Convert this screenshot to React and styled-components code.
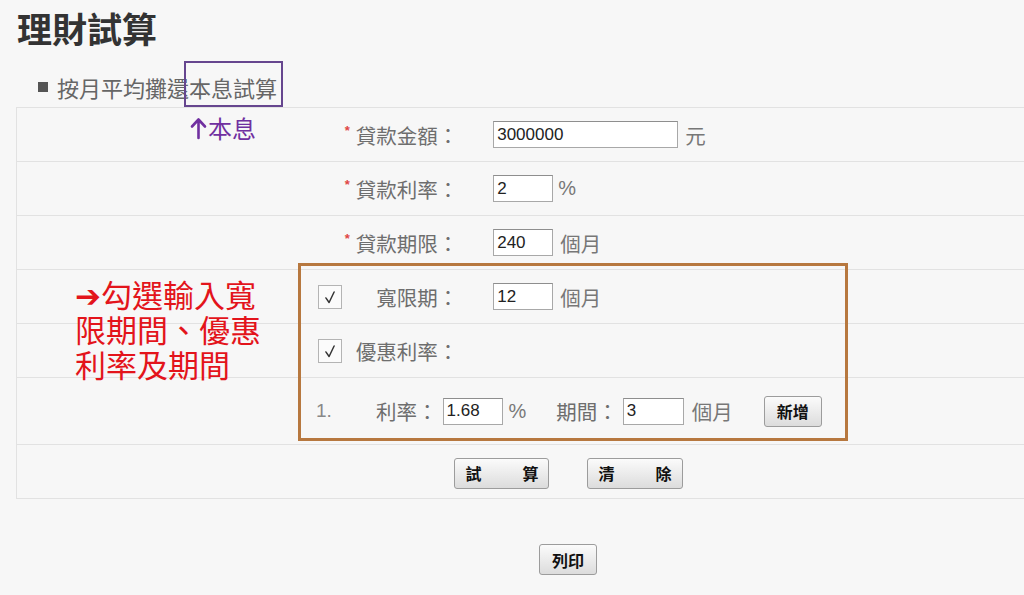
import * as React from 'react';
import styled, { createGlobalStyle } from 'styled-components';

const CJK = `"Noto Sans CJK TC", "Noto Sans", sans-serif`;

const GlobalStyle = createGlobalStyle`
  html, body {
    margin: 0;
    padding: 0;
    background: #f7f7f7;
    overflow: hidden;
  }
  body {
    font-family: ${CJK};
  }
`;

const Page = styled.div`
  position: relative;
  width: 1136px;
  box-sizing: border-box;
  padding: 0 16px;
`;

const Title = styled.h1`
  margin: 0;
  padding: 8px 0 0 1px;
  font-size: 35px;
  line-height: 40px;
  font-weight: 700;
  color: #333;
`;

const Subtitle = styled.div`
  display: flex;
  align-items: center;
  height: 30px;
  margin: 24px 0 5px;
  padding-left: 22px;
  font-size: 22px;
  line-height: 30px;
  color: #666;
`;

const Bullet = styled.span`
  width: 10px;
  height: 10px;
  margin-right: 9px;
  background: #555;
`;

const Marked = styled.span`
  position: relative;
  display: inline-block;
  &::after {
    content: '';
    position: absolute;
    left: -5px;
    right: -6px;
    top: -11px;
    bottom: -5px;
    border: 2px solid #66468f;
  }
`;

const MarkNote = styled.span`
  position: absolute;
  left: 0;
  top: 42px;
  display: flex;
  align-items: center;
  white-space: nowrap;
  font-size: 24px;
  line-height: 28px;
  color: #7030a0;
`;

const Table = styled.div`
  border-top: 1px solid #e2e2e2;
  border-left: 1px solid #e2e2e2;
`;

const Row = styled.div`
  display: grid;
  grid-template-columns: 40% 60%;
  align-items: center;
  box-sizing: border-box;
  height: ${(p) => p.$h || 54}px;
  padding-top: ${(p) => p.$pt || 0}px;
  border-bottom: 1px solid #e2e2e2;
`;

const LabelCell = styled.div`
  display: flex;
  align-items: center;
  justify-content: flex-end;
  padding-left: ${(p) => (p.$check ? 301 : 0)}px;
  font-size: 20.5px;
  color: #6e6e6e;
  & > span:last-child {
    margin-left: auto;
  }
`;

const Star = styled.span`
  align-self: flex-start;
  margin: 4px 6px 0 0;
  font-size: 13px;
  line-height: 13px;
  font-weight: 700;
  color: #e04545;
  font-family: "Liberation Sans", sans-serif;
`;

const ValueCell = styled.div`
  display: flex;
  align-items: center;
  gap: ${(p) => p.$gap || 7}px;
  padding-left: 35px;
  font-size: 20.5px;
  color: #6e6e6e;
`;

const WideCell = styled.div`
  grid-column: 1 / -1;
  display: flex;
  align-items: center;
  padding-left: ${(p) => p.$pl || 0}px;
  justify-content: ${(p) => (p.$center ? 'center' : 'flex-start')};
  gap: ${(p) => p.$gap || 0}px;
  font-size: 20.5px;
  color: #6e6e6e;
`;

const Input = styled.input`
  box-sizing: border-box;
  width: ${(p) => p.$w || 60}px;
  height: 27px;
  margin: 0;
  padding: 0 3px;
  border: 1px solid #a8a8a8;
  border-top-color: #8e8e8e;
  background: #fff;
  font-family: "Liberation Sans", Arial, sans-serif;
  font-size: 17px;
  color: #222;
  outline: none;
`;

const Unit = styled.span`
  font-family: ${(p) => (p.$latin ? '"Liberation Sans", Arial, sans-serif' : CJK)};
  font-size: ${(p) => (p.$latin ? 20 : 20.5)}px;
  color: #777;
`;

const Box = styled.span`
  display: flex;
  align-items: center;
  justify-content: center;
  box-sizing: border-box;
  width: 24px;
  height: 24px;
  border: 1px solid #b4b4b4;
  background: #fbfbfb;
`;

const Num = styled.span`
  width: 60px;
  font-family: "Liberation Sans", Arial, sans-serif;
  font-size: 19px;
  color: #888;
`;

const Button = styled.button`
  box-sizing: border-box;
  height: 31px;
  margin: 0;
  padding: ${(p) => (p.$spaced ? '0 7px 0 10px' : '0 12px')};
  border: 1px solid #9c9c9c;
  border-radius: 3px;
  background: linear-gradient(#fbfbfb, #dcdcdc);
  font-family: ${CJK};
  font-size: 16px;
  font-weight: 700;
  letter-spacing: ${(p) => (p.$spaced ? 3 : 0)}px;
  color: #111;
  white-space: pre;
  cursor: pointer;
`;

const PrintBar = styled.div`
  display: flex;
  justify-content: center;
  margin-top: 45px;
`;

const RedNote = styled.div`
  position: absolute;
  left: 75px;
  top: 276px;
  font-size: 31px;
  line-height: 35px;
  color: #e3141b;
`;

const Frame = styled.div`
  position: absolute;
  left: 298px;
  top: 263px;
  width: 550px;
  height: 178px;
  box-sizing: border-box;
  border: 3px solid #b7783f;
  pointer-events: none;
`;

function Check() {
  return (
    <Box>
      <svg width="22" height="22" viewBox="0 0 24 24">
        <path d="M7.5 13 L11 18 L16.5 6.5" fill="none" stroke="#333" strokeWidth="1.6" strokeLinecap="round" strokeLinejoin="round" />
      </svg>
    </Box>
  );
}

function UpArrow() {
  return (
    <svg width="19" height="24" viewBox="0 0 19 24" aria-hidden="true">
      <path d="M9.5 22 V4 M3 10.5 L9.5 3.5 L16 10.5" fill="none" stroke="#7030a0" strokeWidth="2.6" strokeLinecap="round" strokeLinejoin="round" />
    </svg>
  );
}

export default function App() {
  return (
    <Page>
      <GlobalStyle />
      <Title>理財試算</Title>
      <Subtitle>
        <Bullet />
        按月平均攤還
        <Marked>
          本息試算
          <MarkNote>
            <UpArrow />
            本息
          </MarkNote>
        </Marked>
      </Subtitle>

      <Table>
        <Row>
          <LabelCell><Star>*</Star>貸款金額：</LabelCell>
          <ValueCell>
            <Input $w={185} value="3000000" readOnly />
            <Unit>元</Unit>
          </ValueCell>
        </Row>
        <Row>
          <LabelCell><Star>*</Star>貸款利率：</LabelCell>
          <ValueCell $gap={5}>
            <Input value="2" readOnly />
            <Unit $latin>%</Unit>
          </ValueCell>
        </Row>
        <Row>
          <LabelCell><Star>*</Star>貸款期限：</LabelCell>
          <ValueCell>
            <Input value="240" readOnly />
            <Unit>個月</Unit>
          </ValueCell>
        </Row>
        <Row>
          <LabelCell $check>
            <Check />
            <span>寬限期：</span>
          </LabelCell>
          <ValueCell>
            <Input value="12" readOnly />
            <Unit>個月</Unit>
          </ValueCell>
        </Row>
        <Row>
          <LabelCell $check>
            <Check />
            <span>優惠利率：</span>
          </LabelCell>
          <ValueCell />
        </Row>
        <Row $h={67}>
          <WideCell $pl={299}>
            <Num>1.</Num>
            <span>利率：</span>
            <Input value="1.68" readOnly style={{ marginLeft: 5 }} />
            <Unit $latin style={{ marginLeft: 6 }}>%</Unit>
            <span style={{ marginLeft: 30 }}>期間：</span>
            <Input $w={61} value="3" readOnly style={{ marginLeft: 5 }} />
            <Unit style={{ marginLeft: 8 }}>個月</Unit>
            <Button style={{ marginLeft: 31 }}>新增</Button>
          </WideCell>
        </Row>
        <Row $pt={3}>
          <WideCell $center $gap={38}>
            <Button $spaced>{'試　　算'}</Button>
            <Button $spaced>{'清　　除'}</Button>
          </WideCell>
        </Row>
      </Table>

      <PrintBar>
        <Button>列印</Button>
      </PrintBar>

      <RedNote>
        ➔勾選輸入寬<br />
        限期間、優惠<br />
        利率及期間
      </RedNote>
      <Frame />
    </Page>
  );
}
